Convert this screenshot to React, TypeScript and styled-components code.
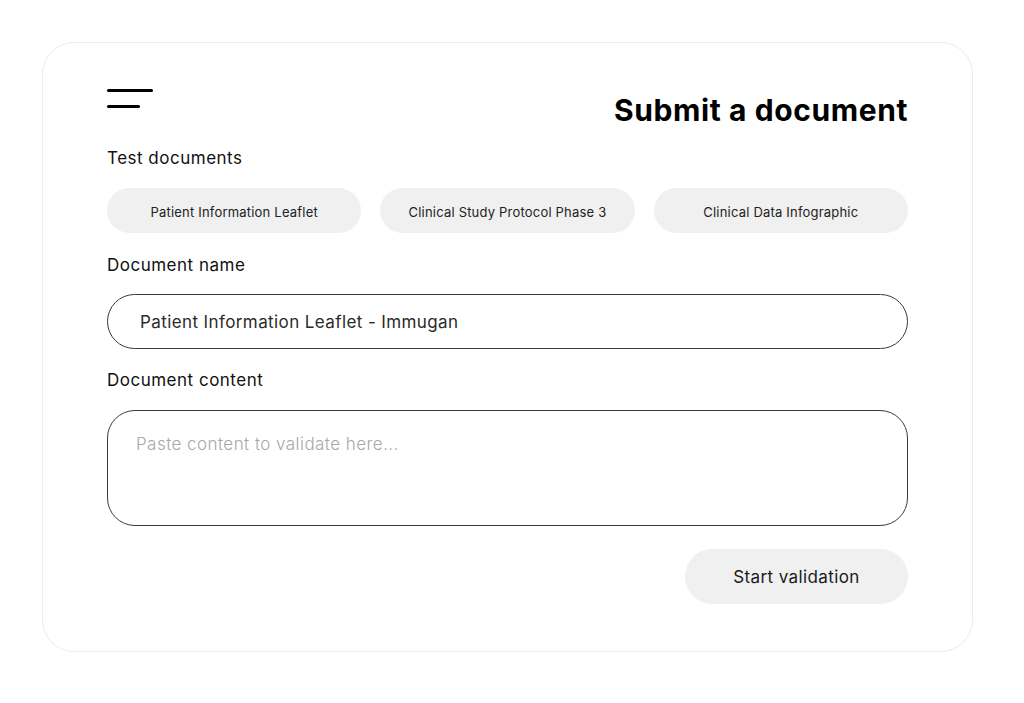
import React from "react";
import styled, { createGlobalStyle } from "styled-components";

const Global = createGlobalStyle`
  html, body { margin: 0; padding: 0; background: #ffffff; }
  body { font-family: "Inter", "Lato", sans-serif; color: #111; }
  * { box-sizing: border-box; }
`;

const Page = styled.div`
  width: 1024px;
  height: 703px;
  padding: 42px 0 0 42px;
`;

const Card = styled.div`
  width: 931px;
  height: 610px;
  border: 1px solid #ececec;
  border-radius: 32px;
  background: #fff;
  padding: 45px 64px 0 64px;
  display: flex;
  flex-direction: column;
`;

const Header = styled.div`
  display: flex;
  justify-content: space-between;
  align-items: flex-start;
  height: 38px;
`;

const Burger = styled.button`
  all: unset;
  display: flex;
  flex-direction: column;
  gap: 13px;
  padding-top: 1px;
`;

const BurgerLine = styled.span<{ $w: number }>`
  display: block;
  width: ${(p) => p.$w}px;
  height: 3px;
  border-radius: 2px;
  background: #000;
`;

const Title = styled.h1`
  margin: 5px 0 0 0;
  font-size: 30px;
  line-height: 34px;
  font-weight: 700;
  letter-spacing: 0.6px;
  color: #000;
`;

const Label = styled.div<{ $mt: number }>`
  margin-top: ${(p) => p.$mt}px;
  font-size: 17px;
  line-height: 20px;
  font-weight: 400;
  letter-spacing: 0.5px;
  color: #111;
`;

const ChipRow = styled.div`
  margin-top: 20px;
  display: grid;
  grid-template-columns: repeat(3, 1fr);
  gap: 19px;
`;

const Chip = styled.button`
  all: unset;
  box-sizing: border-box;
  height: 45px;
  border-radius: 23px;
  background: #f0f0f0;
  display: flex;
  align-items: center;
  justify-content: center;
  padding-top: 2px;
  font-family: "Inter", "Lato", sans-serif;
  font-size: 13px;
  letter-spacing: 0.2px;
  color: #222;
`;

const NameInput = styled.div`
  margin-top: 19px;
  height: 55px;
  border: 1.3px solid #3a3a3a;
  border-radius: 28px;
  display: flex;
  align-items: center;
  padding-left: 32px;
  font-size: 17px;
  letter-spacing: 0.4px;
  color: #2a2a2a;
`;

const ContentArea = styled.div`
  margin-top: 20px;
  height: 116px;
  border: 1.3px solid #3a3a3a;
  border-radius: 28px;
  padding: 23px 28px;
  font-size: 17px;
  line-height: 20px;
  font-weight: 300;
  letter-spacing: 0.45px;
  color: #a8a8a8;
`;

const Footer = styled.div`
  margin-top: 23px;
  display: flex;
  justify-content: flex-end;
`;

const PrimaryButton = styled.button`
  all: unset;
  box-sizing: border-box;
  width: 223px;
  height: 55px;
  border-radius: 28px;
  background: #f0f0f0;
  display: flex;
  align-items: center;
  justify-content: center;
  font-family: "Inter", "Lato", sans-serif;
  font-size: 17px;
  letter-spacing: 0.4px;
  color: #1a1a1a;
`;

export default function App() {
  return (
    <>
      <Global />
      <Page>
        <Card>
          <Header>
            <Burger aria-label="menu">
              <BurgerLine $w={46} />
              <BurgerLine $w={33} />
            </Burger>
            <Title>Submit a document</Title>
          </Header>
          <Label $mt={22}>Test documents</Label>
          <ChipRow>
            <Chip>Patient Information Leaflet</Chip>
            <Chip>Clinical Study Protocol Phase 3</Chip>
            <Chip>Clinical Data Infographic</Chip>
          </ChipRow>
          <Label $mt={22}>Document name</Label>
          <NameInput>Patient Information Leaflet - Immugan</NameInput>
          <Label $mt={21}>Document content</Label>
          <ContentArea>Paste content to validate here...</ContentArea>
          <Footer>
            <PrimaryButton>Start validation</PrimaryButton>
          </Footer>
        </Card>
      </Page>
    </>
  );
}
